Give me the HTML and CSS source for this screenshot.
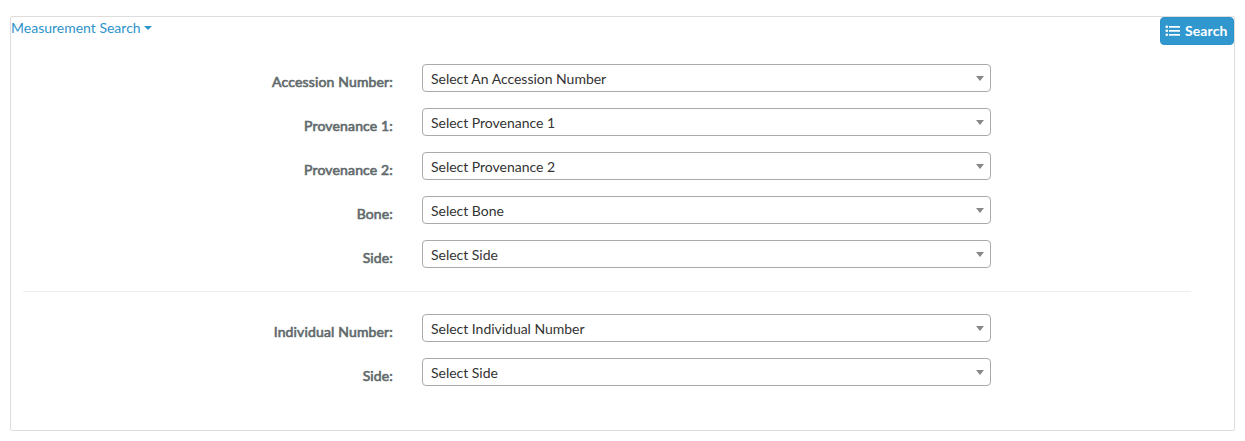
FILE: index.html
```html
<!DOCTYPE html>
<html lang="en">
<head>
<meta charset="utf-8">
<title>Measurement Search</title>
<link rel="stylesheet" href="styles.css">
</head>
<body>
<main class="panel">
  <header class="panel-head">
    <a class="toggle" href="#"><span class="toggle-text">Measurement Search</span><span class="caret"></span></a>
    <button class="search-btn" type="button">
      <svg class="list-icon" width="15" height="12" viewBox="0 0 15 12" fill="#fff"><rect x="0.5" y="0.5" width="2.5" height="2.5" rx="1"/><rect x="4" y="1" width="11" height="1.7"/><rect x="0.5" y="4.5" width="2.5" height="2.5" rx="1"/><rect x="4" y="5" width="11" height="1.7"/><rect x="0.5" y="8.5" width="2.5" height="2.5" rx="1"/><rect x="4" y="9" width="11" height="1.7"/></svg>
      <span>Search</span>
    </button>
  </header>
  <form class="fields">
    <div class="row"><label class="label">Accession Number:</label><div class="select"><span>Select An Accession Number</span><i class="arrow"></i></div></div>
    <div class="row"><label class="label">Provenance 1:</label><div class="select"><span>Select Provenance 1</span><i class="arrow"></i></div></div>
    <div class="row"><label class="label">Provenance 2:</label><div class="select"><span>Select Provenance 2</span><i class="arrow"></i></div></div>
    <div class="row"><label class="label">Bone:</label><div class="select"><span>Select Bone</span><i class="arrow"></i></div></div>
    <div class="row"><label class="label">Side:</label><div class="select"><span>Select Side</span><i class="arrow"></i></div></div>
    <hr class="divider">
    <div class="row"><label class="label">Individual Number:</label><div class="select"><span>Select Individual Number</span><i class="arrow"></i></div></div>
    <div class="row"><label class="label">Side:</label><div class="select"><span>Select Side</span><i class="arrow"></i></div></div>
  </form>
</main>
</body>
</html>
```
FILE: styles.css
```css
* { box-sizing: border-box; }
body { margin: 0; padding: 16px 10px 0; background: #fff; font: 14px/20px Lato, sans-serif; color: #626a6c; }
.panel { height: 415px; border: 1px solid #ddd; border-radius: 2px; }
.panel-head { display: flex; justify-content: space-between; align-items: flex-start; height: 47px; }
.toggle { display: flex; align-items: center; gap: 3px; margin-top: 1px; color: #2d93cb; text-decoration: none; }
.caret { border: 4px solid transparent; border-top-color: currentColor; border-bottom: 0; }
.search-btn { display: flex; align-items: center; gap: 5px; width: 74px; height: 28px; padding: 0 4px; border: 1px solid #2c92c8; border-radius: 4px; background: #3098cf; color: #fff; font: bold 14px/20px Lato, sans-serif; letter-spacing: 0.1px; }
.list-icon { flex: none; }
.fields { display: flex; flex-direction: column; gap: 16px; }
.row { display: flex; height: 28px; }
.label { width: 382px; padding-top: 8px; text-align: right; font-weight: 400; letter-spacing: 0.15px; -webkit-text-stroke: 0.65px currentColor; }
.select { display: flex; align-items: center; justify-content: space-between; width: 569px; margin-left: 29px; padding: 2px 6px 0 8px; border: 1px solid #aaa; border-radius: 4px; color: #333; line-height: 20px; letter-spacing: -0.02px; }
.arrow { margin-top: -2px; border: 4px solid transparent; border-top: 5px solid #888; border-bottom: 0; }
.divider { width: 1168px; height: 1px; margin: 7px 0 6px 12px; border: 0; background: #eee; }
```
